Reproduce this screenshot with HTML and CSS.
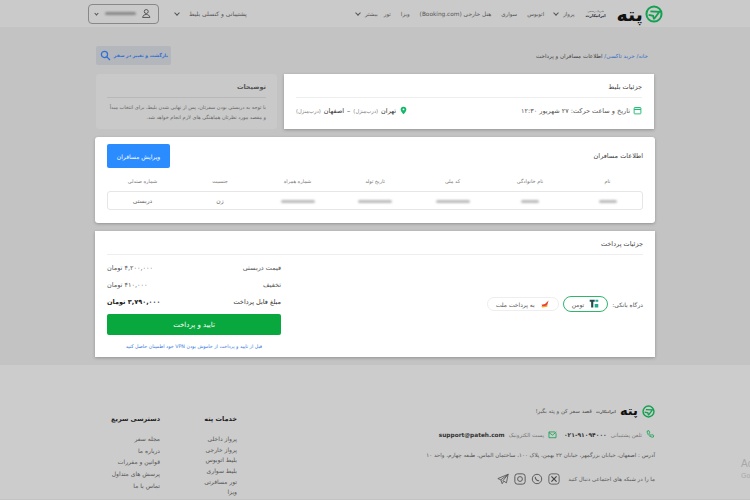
FILE: index.html
```html
<!DOCTYPE html>
<html lang="fa" dir="rtl">
<head>
    <meta charset="UTF-8">
    <meta name="viewport" content="width=device-width, initial-scale=1.0">
    <title>پته</title>
    <link rel="stylesheet" href="styles.css">
</head>
<body>
    <header class="top-bar">
        <div class="logo">
            <svg class="logo-mark" viewBox="0 0 20 20"><circle cx="10" cy="10" r="8.4" fill="none" stroke="#12a150" stroke-width="2.2"/><path d="M4 11l5 1 1 4M6 7l10 .5-6 8" fill="none" stroke="#12a150" stroke-width="2"/></svg>
            <span class="logo-text">پته</span>
        </div>
        <div class="partner-logo">
            <span class="partner-small">شریک رسمی</span>
            <span class="partner-name">ایرانیکارت</span>
        </div>
        <nav class="main-nav">
            <a class="with-arrow">پرواز</a>
            <a>اتوبوس</a>
            <a>سواری</a>
            <a class="nav-hotel">هتل خارجی (Booking.com)</a>
            <a>ویزا</a>
            <a>تور</a>
            <a class="with-arrow nav-more">بیشتر</a>
        </nav>
        <a class="support-link with-arrow">پشتیبانی و کنسلی بلیط</a>
        <div class="user-box">
            <svg class="user-icon" viewBox="0 0 16 16"><circle cx="8" cy="5" r="3" fill="none" stroke="#444" stroke-width="1.3"/><path d="M2.5 14c.5-3 2.500-4.500 5.500-4.500s5 1.500 5.500 4.500z" fill="none" stroke="#444" stroke-width="1.300"/></svg>
            <span class="blur-bar user-name"></span>
            <span class="arrow"></span>
        </div>
    </header>

    <main class="page">
        <div class="crumb-row">
            <div class="crumbs"><a>خانه/</a> <a>خرید تاکسی/</a> اطلاعات مسافران و پرداخت</div>
            <button class="back-btn">
                بازگشت و تغییر در سفر
                <svg viewBox="0 0 16 16"><circle cx="6.500" cy="6.500" r="4.500" fill="none" stroke="#2f6fd6" stroke-width="1.800"/><path d="M10 10l4.500 4.500" stroke="#2f6fd6" stroke-width="2"/></svg>
            </button>
        </div>

        <div class="top-cards">
            <section class="card ticket-card">
                <h2 class="card-title">جزئیات بلیط</h2>
                <div class="ticket-row">
                    <div class="ticket-date">
                        <svg viewBox="0 0 12 12"><rect x="1.500" y="2" width="9" height="8.500" rx="1" fill="none" stroke="#12b76a" stroke-width="1.200"/><path d="M1.500 4.500h9" stroke="#12b76a" stroke-width="1.500"/></svg>
                        تاریخ و ساعت حرکت: ۲۷ شهریور ۱۲:۳۰
                    </div>
                    <div class="ticket-route">
                        <svg viewBox="0 0 10 12"><path d="M5 11.500C2.500 8.500 1 6.500 1 4.500a4 4 0 018 0c0 2-1.500 4-4 7z" fill="#12b76a"/><circle cx="5" cy="4.500" r="1.300" fill="#fff"/></svg>
                        <b>تهران</b> <span class="muted">(درب‌منزل)</span> <b>–</b> <b>اصفهان</b> <span class="muted">(درب‌منزل)</span>
                    </div>
                </div>
            </section>
            <aside class="note-card">
                <h2 class="card-title">توضیحات</h2>
                <p>با توجه به دربستی بودن سفرتان، پس از نهایی شدن بلیط، برای انتخاب مبدأ و مقصد مورد نظرتان هماهنگی های لازم انجام خواهد شد.</p>
            </aside>
        </div>

        <section class="card passenger-card">
            <div class="passenger-head">
                <h2 class="plain-title">اطلاعات مسافران</h2>
                <button class="edit-btn">ویرایش مسافران</button>
            </div>
            <div class="passenger-cols passenger-labels">
                <span>نام</span><span>نام خانوادگی</span><span>کد ملی</span><span>تاریخ تولد</span><span>شماره همراه</span><span>جنسیت</span><span>شماره صندلی</span>
            </div>
            <div class="passenger-cols passenger-row">
                <span><i class="blur-bar w-s"></i></span>
                <span><i class="blur-bar w-s"></i></span>
                <span><i class="blur-bar w-l"></i></span>
                <span><i class="blur-bar w-l"></i></span>
                <span><i class="blur-bar w-l"></i></span>
                <span>زن</span>
                <span>دربستی</span>
            </div>
        </section>

        <section class="card payment-card">
            <h2 class="card-title">جزئیات پرداخت</h2>
            <div class="payment-body">
                <div class="gateways">
                    <span class="gateway-label">درگاه بانکی:</span>
                    <div class="gateway active">
                        <svg viewBox="0 0 14 14"><path d="M1 1h7v3H6v8H3V4H1z" fill="#1c4d4a"/><path d="M9 1h4v3H9zM8 7h5v5H8z" fill="#1faa8f"/></svg>
                        تومن
                    </div>
                    <div class="gateway">
                        <svg viewBox="0 0 14 14"><path d="M2 8l5-1 5-5-2 7-6 2z" fill="#e8412c"/><path d="M2 10l9-1-1 2-7 1z" fill="#f5a623"/></svg>
                        به پرداخت ملت
                    </div>
                </div>
                <div class="summary">
                    <div class="summary-row"><span>قیمت دربستی</span><span>۴,۲۰۰,۰۰۰ تومان</span></div>
                    <div class="summary-row"><span>تخفیف</span><span>۴۱۰,۰۰۰ تومان</span></div>
                    <div class="summary-row total"><span>مبلغ قابل پرداخت</span><b>۳,۷۹۰,۰۰۰ تومان</b></div>
                    <button class="pay-btn">تایید و پرداخت</button>
                    <p class="vpn-note">قبل از تایید و پرداخت از خاموش بودن VPN خود اطمینان حاصل کنید</p>
                </div>
            </div>
        </section>
    </main>

    <footer class="site-footer">
        <div class="footer-info">
            <div class="footer-brand">
                <svg class="logo-mark small" viewBox="0 0 20 20"><circle cx="10" cy="10" r="8.400" fill="none" stroke="#12a150" stroke-width="2.200"/><path d="M4 11l5 1 1 4M6 7l10 .5-6 8" fill="none" stroke="#12a150" stroke-width="2"/></svg>
                <span class="logo-text small">پته</span>
                <span class="partner-tiny">ایرانیکارت</span>
                <span>قصد سفر کن و پته بگیر!</span>
            </div>
            <div class="footer-contact">
                <svg viewBox="0 0 14 14"><path d="M2 1.500l2.500-.5 1.500 3-1.500 1c.5 1.500 2 3 3.500 3.500l1-1.500 3 1.500-.5 2.500c-5 1-10.500-4.500-9.500-9.500z" fill="none" stroke="#12a150" stroke-width="1.300"/></svg>
                <span class="muted">تلفن پشتیبانی</span>
                <b class="phone">۰۲۱-۹۱۰۹۴۰۰۰</b>
                <svg class="mail-icon" viewBox="0 0 14 14"><path d="M11 3H1.500v9h11V5M1.500 4l5.500 4 6-5" fill="none" stroke="#12a150" stroke-width="1.300"/></svg>
                <span class="muted">پست الکترونیک</span>
                <b class="email">support@pateh.com</b>
            </div>
            <p class="footer-address">آدرس : اصفهان، خیابان بزرگمهر، خیابان ۲۲ بهمن، پلاک ۱۰۰، ساختمان الماس، طبقه چهارم، واحد ۱۰</p>
            <div class="footer-social">
                <span>ما را در شبکه های اجتماعی دنبال کنید</span>
                <svg viewBox="0 0 14 14"><rect x="1" y="1" width="12" height="12" rx="3" fill="none" stroke="#555" stroke-width="1"/><path d="M4 4l6 6M10 4l-6 6" stroke="#444" stroke-width="1.400"/></svg>
                <svg viewBox="0 0 14 14"><circle cx="7" cy="7" r="5.500" fill="none" stroke="#555" stroke-width="1.100"/><path d="M5 4.500c-.5 2 2 5 4.500 4.500" fill="none" stroke="#555" stroke-width="1.200"/></svg>
                <svg viewBox="0 0 14 14"><rect x="1" y="1" width="12" height="12" rx="3" fill="none" stroke="#555" stroke-width="1.100"/><circle cx="7" cy="7" r="2.800" fill="none" stroke="#555" stroke-width="1.100"/></svg>
                <svg viewBox="0 0 14 14"><path d="M13 1.500L1 6.500l3.500 1.500L6 12.500l2-3 3 2zM4.500 8L13 1.500 6.500 9.500" fill="none" stroke="#555" stroke-width="1"/></svg>
            </div>
        </div>
        <div class="footer-col">
            <h3>خدمات پته</h3>
            <a>پرواز داخلی</a>
            <a>پرواز خارجی</a>
            <a>بلیط اتوبوس</a>
            <a>بلیط سواری</a>
            <a>تور مسافرتی</a>
            <a>ویزا</a>
        </div>
        <div class="footer-col">
            <h3>دسترسی سریع</h3>
            <a>مجله سفر</a>
            <a>درباره ما</a>
            <a>قوانین و مقررات</a>
            <a>پرسش های متداول</a>
            <a>تماس با ما</a>
        </div>
    </footer>

    <div class="activate-note" dir="ltr">Activate Windows<br><small>Go to Settings to activate</small></div>
</body>
</html>
```

FILE: styles.css
```css
* {
    margin: 0;
    padding: 0;
    box-sizing: border-box;
}
html, body {
    height: 500px;
    overflow: hidden;
}
body {
    position: relative;
    font-family: "DejaVu Sans", "Noto Sans", sans-serif;
    font-size: 6px;
    background-color: #c3c3c3;
    color: #444;
}
button {
    font-family: inherit;
    border: none;
}
.muted {
    color: #777;
    font-weight: normal;
}

/* Header */
.top-bar {
    display: flex;
    align-items: center;
    height: 27px;
    padding: 0 87px 0 88px;
    background-color: #cacaca;
}
.logo {
    display: flex;
    align-items: center;
    gap: 2px;
}
.logo-mark {
    width: 18px;
    height: 18px;
}
.logo-mark.small {
    width: 13px;
    height: 13px;
}
.logo-text {
    font-size: 19px;
    font-weight: bold;
    color: #111;
    line-height: 14px;
}
.logo-text.small {
    font-size: 13px;
    line-height: 12px;
}
.partner-logo {
    display: flex;
    flex-direction: column;
    align-items: center;
    width: 28px;
    margin-right: 7px;
    font-size: 4px;
    color: #555;
}
.partner-small {
    white-space: nowrap;
    font-size: 3px;
}
.partner-name {
    font-weight: bold;
    color: #223;
    white-space: nowrap;
}
.main-nav {
    display: flex;
    gap: 10px;
    margin-right: 7px;
}
.main-nav a {
    font-size: 5.500px;
    color: #555;
    white-space: nowrap;
}
.main-nav .nav-hotel {
    font-size: 5.800px;
}
.nav-more {
    margin-right: -4px;
}
.support-link {
    font-size: 6px;
    color: #555;
    white-space: nowrap;
    margin-right: auto;
}
.with-arrow::after, .arrow {
    content: "";
    display: inline-block;
    width: 3px;
    height: 3px;
    margin: 0 5px 1px 0;
    border-left: 1px solid #555;
    border-bottom: 1px solid #555;
    transform: rotate(-45deg);
}
.support-link::after {
    margin-right: 10px;
}
.user-box {
    display: flex;
    align-items: center;
    gap: 5px;
    width: 71px;
    height: 20px;
    margin-right: 16px;
    padding: 0 6px;
    border: 1px solid #888;
    border-radius: 4px;
}
.user-icon {
    width: 11px;
    height: 11px;
}
.blur-bar {
    display: inline-block;
    height: 3px;
    background-color: #888;
    border-radius: 2px;
    filter: blur(1px);
}
.user-name {
    width: 33px;
}
.arrow {
    margin: 0 2px 0 0;
}

/* Main */
.page {
    width: 560px;
    margin: 0 auto;
    padding-top: 19px;
}
.crumb-row {
    display: flex;
    justify-content: space-between;
    align-items: center;
    height: 19px;
    padding: 0 7px 0 1px;
}
.crumbs {
    font-size: 5.600px;
    color: #444;
}
.crumbs a {
    color: #3a6fc4;
}
.back-btn {
    display: flex;
    align-items: center;
    justify-content: space-between;
    width: 75px;
    height: 19px;
    padding: 0 3px 0 4px;
    font-size: 4.600px;
    font-weight: bold;
    white-space: nowrap;
    color: #2f6fd6;
    background-color: #b3b6bb;
    border-radius: 2px;
}
.back-btn svg {
    width: 11px;
    height: 11px;
}
.top-cards {
    display: flex;
    gap: 7px;
    margin-top: 9px;
}
.card {
    background-color: #fff;
    box-shadow: 0 1px 3px rgba(0, 0, 0, 0.25);
}
.card-title {
    padding-bottom: 6px;
    font-size: 6.500px;
    font-weight: normal;
    color: #444;
    border-bottom: 1px solid #eee;
}
.ticket-card {
    width: 370px;
    height: 55px;
    margin-right: 1px;
    padding: 9px 12px 0;
}
.ticket-row {
    display: flex;
    justify-content: space-between;
    align-items: center;
    margin-top: 8px;
    font-size: 6.500px;
    color: #555;
}
.ticket-date, .ticket-route {
    display: flex;
    align-items: center;
    gap: 3px;
}
.ticket-date svg {
    width: 9px;
    height: 9px;
}
.ticket-route svg {
    width: 7px;
    height: 9px;
    margin-left: 1px;
}
.ticket-route b {
    font-weight: normal;
    color: #333;
}
.ticket-route .muted {
    font-size: 5.200px;
}
.note-card {
    width: 181px;
    height: 55px;
    padding: 9px 11px 0;
    background-color: #c9c9c9;
    border-radius: 3px;
}
.note-card .card-title {
    border-bottom-color: #b8b8b8;
    font-weight: bold;
    color: #555;
}
.note-card p {
    margin-top: 4px;
    font-size: 5px;
    line-height: 10px;
    color: #666;
}
.passenger-card {
    height: 86px;
    margin-top: 8px;
    padding: 7px 12px;
    border-radius: 3px;
}
.passenger-head {
    display: flex;
    justify-content: space-between;
    align-items: center;
    height: 24px;
}
.plain-title {
    font-size: 6.500px;
    font-weight: normal;
    color: #444;
}
.edit-btn {
    width: 63px;
    height: 24px;
    font-size: 6px;
    color: #fff;
    background-color: #2b8cff;
    border-radius: 2px;
}
.passenger-cols {
    display: grid;
    grid-template-columns: repeat(7, 77.500px);
    justify-content: center;
    text-align: center;
}
.passenger-labels {
    margin-top: 10px;
    font-size: 5px;
    color: #777;
}
.passenger-row {
    align-items: center;
    height: 19px;
    margin-top: 7px;
    font-size: 6px;
    color: #666;
    border: 1px solid #e6e6e6;
    border-radius: 3px;
}
.w-s {
    width: 18px;
    background-color: #bbb;
}
.w-l {
    width: 34px;
    background-color: #bbb;
}
.payment-card {
    height: 126px;
    margin-top: 8px;
    padding: 9px 12px 0;
}
.payment-body {
    display: flex;
    justify-content: space-between;
    margin-top: 4px;
}
.gateways {
    display: flex;
    align-items: center;
    gap: 4px;
    height: 90px;
    font-size: 6px;
    color: #555;
}
.gateway-label {
    font-size: 6px;
}
.gateway {
    display: flex;
    align-items: center;
    gap: 5px;
    height: 14px;
    padding: 0 8px;
    border: 1px solid #eee;
    border-radius: 9px;
    white-space: nowrap;
}
.gateway.active {
    height: 16px;
    border-color: #2fb66b;
}
.gateway svg {
    width: 10px;
    height: 10px;
}
.summary {
    width: 174px;
}
.summary-row {
    display: flex;
    justify-content: space-between;
    align-items: center;
    height: 17px;
    font-size: 6.500px;
    color: #555;
}
.summary-row.total {
    color: #333;
}
.summary-row b {
    color: #222;
}
.pay-btn {
    display: block;
    width: 100%;
    height: 21px;
    margin-top: 4px;
    font-size: 7px;
    color: #fff;
    background-color: #09a83f;
    border-radius: 2px;
}
.vpn-note {
    margin-top: 9px;
    font-size: 4.800px;
    text-align: center;
    color: #3a7be0;
    white-space: nowrap;
}

/* Footer */
.site-footer {
    display: flex;
    height: 134px;
    margin-top: 8px;
    padding: 39px 95px 0 0;
    background-color: #cccccc;
}
.footer-info {
    flex: none;
    width: 322px;
    margin-left: 96px;
    font-size: 5.500px;
    color: #555;
}
.footer-brand, .footer-contact, .footer-social {
    display: flex;
    align-items: center;
    gap: 4px;
}
.footer-brand {
    height: 14px;
    white-space: nowrap;
}
.partner-tiny {
    width: 20px;
    font-size: 4px;
    font-weight: bold;
}
.footer-contact {
    margin-top: 12px;
    white-space: nowrap;
}
.footer-contact svg {
    width: 9px;
    height: 9px;
}
.mail-icon {
    margin-right: 3px;
}
.footer-contact b {
    font-size: 6px;
    color: #333;
}
.footer-contact .email {
    font-size: 5.800px;
}
.footer-address {
    margin-top: 13px;
    font-size: 5.500px;
    white-space: nowrap;
}
.footer-social {
    gap: 5px;
    margin-top: 15px;
}
.footer-social span {
    margin-left: 3px;
    font-size: 5.500px;
}
.footer-social svg {
    width: 12px;
    height: 12px;
}
.footer-col {
    flex: none;
    display: flex;
    flex-direction: column;
    width: 77px;
    padding-top: 11px;
    font-size: 6px;
    color: #555;
}
.footer-col h3 {
    margin-bottom: 12px;
    font-size: 6.500px;
    color: #222;
}
.footer-col a {
    height: 11.700px;
    white-space: nowrap;
}
.activate-note {
    position: absolute;
    left: 741px;
    top: 458px;
    font-family: "Liberation Sans", sans-serif;
    font-size: 10px;
    line-height: 11px;
    color: #a8a8a8;
    white-space: nowrap;
}
.activate-note small {
    font-size: 7px;
}
```
